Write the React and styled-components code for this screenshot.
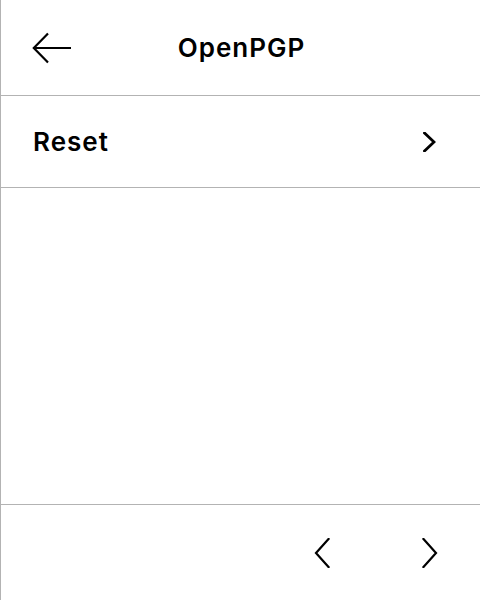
import React from "react";
import styled, { createGlobalStyle } from "styled-components";

const GlobalStyle = createGlobalStyle`
  html, body {
    margin: 0;
    padding: 0;
    background: #ffffff;
  }
  body {
    font-family: Inter, "Noto Sans", "Liberation Sans", sans-serif;
    color: #000000;
  }
`;

const Screen = styled.div`
  box-sizing: border-box;
  width: 480px;
  height: 600px;
  display: flex;
  flex-direction: column;
  border-left: 1px solid #b3b3b3;
  background: #ffffff;
`;

const Header = styled.header`
  box-sizing: border-box;
  height: 96px;
  display: grid;
  grid-template-columns: 1fr auto 1fr;
  align-items: center;
  padding: 0 31px;
  border-bottom: 1px solid #b3b3b3;
`;

const IconButton = styled.button`
  display: flex;
  align-items: center;
  justify-content: center;
  padding: 0;
  border: 0;
  background: none;
  color: #000000;
  cursor: pointer;
  width: ${(p) => p.$w || 40}px;
  height: ${(p) => p.$h || 40}px;
`;

const Title = styled.h1`
  margin: 0;
  font-size: 26px;
  font-weight: 600;
  letter-spacing: 1px;
  padding-left: 2px;
`;

const MenuRow = styled.div`
  box-sizing: border-box;
  height: 92px;
  display: flex;
  align-items: center;
  justify-content: space-between;
  padding: 0 44px 0 32px;
  border-bottom: 1px solid #b3b3b3;
  cursor: pointer;
`;

const RowLabel = styled.span`
  font-size: 26px;
  font-weight: 600;
  letter-spacing: 1px;
`;

const Body = styled.main`
  flex: 1;
`;

const Footer = styled.footer`
  box-sizing: border-box;
  height: 96px;
  display: flex;
  align-items: center;
  justify-content: flex-end;
  gap: 48px;
  padding: 0 20px 0 0;
  border-top: 1px solid #b3b3b3;
`;

function BackArrow() {
  return (
    <svg width="40" height="32" viewBox="0 0 40 32" fill="none">
      <path d="M39 16H2M16 1.5L1.8 16L16 30.5" stroke="#000" strokeWidth="2.2" />
    </svg>
  );
}

function Chevron({ dir = "right", w = 16, h = 30, sw = 2.2 }) {
  const d =
    dir === "right"
      ? `M1.5 1 L${w - 2} ${h / 2} L1.5 ${h - 1}`
      : `M${w - 1.5} 1 L2 ${h / 2} L${w - 1.5} ${h - 1}`;
  return (
    <svg width={w} height={h} viewBox={`0 0 ${w} ${h}`} fill="none">
      <path d={d} stroke="#000" strokeWidth={sw} strokeLinecap="square" />
    </svg>
  );
}

export default function App() {
  return (
    <>
      <GlobalStyle />
      <Screen>
        <Header>
          <IconButton $w={40} $h={40} aria-label="Back">
            <BackArrow />
          </IconButton>
          <Title>OpenPGP</Title>
          <span />
        </Header>
        <MenuRow>
          <RowLabel>Reset</RowLabel>
          <Chevron dir="right" w={13} h={20} sw={2.8} />
        </MenuRow>
        <Body />
        <Footer>
          <IconButton $w={60} $h={60} aria-label="Previous">
            <Chevron dir="left" />
          </IconButton>
          <IconButton $w={60} $h={60} aria-label="Next">
            <Chevron dir="right" />
          </IconButton>
        </Footer>
      </Screen>
    </>
  );
}
